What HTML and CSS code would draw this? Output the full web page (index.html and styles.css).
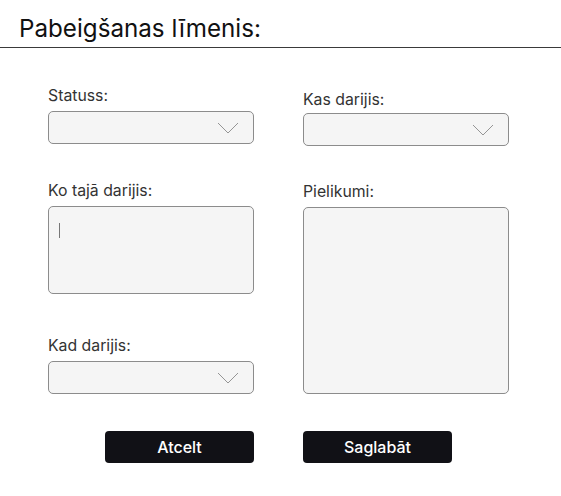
FILE: index.html
```html
<!DOCTYPE html>
<html lang="lv">
<head>
<meta charset="utf-8">
<title>Pabeigšanas līmenis</title>
<link rel="stylesheet" href="styles.css">
</head>
<body>
<header class="header">
  <h1 class="title">Pabeigšanas līmenis:</h1>
</header>
<main class="form">
  <div class="col col-left">
    <div class="field f-status">
      <label class="label">Statuss:</label>
      <div class="select"><svg class="chev" width="22" height="12" viewBox="0 0 22 12"><path d="M1 1 L11 11 L21 1" fill="none" stroke="#8a8a8a" stroke-width="0.9"/></svg></div>
    </div>
    <div class="field f-what">
      <label class="label">Ko tajā darijis:</label>
      <div class="textarea"><span class="caret"></span></div>
    </div>
    <div class="field f-when">
      <label class="label">Kad darijis:</label>
      <div class="select"><svg class="chev" width="22" height="12" viewBox="0 0 22 12"><path d="M1 1 L11 11 L21 1" fill="none" stroke="#8a8a8a" stroke-width="0.9"/></svg></div>
    </div>
  </div>
  <div class="col col-right">
    <div class="field f-who">
      <label class="label">Kas darijis:</label>
      <div class="select"><svg class="chev" width="22" height="12" viewBox="0 0 22 12"><path d="M1 1 L11 11 L21 1" fill="none" stroke="#8a8a8a" stroke-width="0.9"/></svg></div>
    </div>
    <div class="field f-att">
      <label class="label">Pielikumi:</label>
      <div class="attach"></div>
    </div>
  </div>
  <div class="buttons">
    <button class="btn">Atcelt</button>
    <button class="btn">Saglabāt</button>
  </div>
</main>
</body>
</html>
```
FILE: styles.css
```css
html, body {
  margin: 0;
  padding: 0;
  background: #ffffff;
  font-family: Inter, "Noto Sans", sans-serif;
  color: #1a1a1a;
}
.header {
  height: 48px;
  border-bottom: 1px solid #3a3a3a;
  padding-left: 19px;
  box-sizing: border-box;
}
.title {
  margin: 0;
  padding-top: 15px;
  font-size: 24.2px;
  font-weight: 400;
  line-height: 28px;
  color: #111;
}
.form {
  display: grid;
  grid-template-columns: 206px 206px;
  column-gap: 49px;
  padding-left: 48px;
}
.col {
  display: flex;
  flex-direction: column;
}
.label {
  display: block;
  font-size: 15.8px;
  line-height: 18px;
  color: #333;
  margin-bottom: 6px;
}
.select {
  height: 33px;
  box-sizing: border-box;
  border: 1px solid #8c8c8c;
  border-radius: 5px;
  background: #f5f5f5;
  display: flex;
  align-items: center;
  justify-content: flex-end;
  padding-right: 14px;
}
.chev { display: block; }
.textarea {
  height: 88px;
  box-sizing: border-box;
  border: 1px solid #8c8c8c;
  border-radius: 5px;
  background: #f5f5f5;
  padding: 16px 0 0 10px;
}
.caret {
  display: block;
  width: 1px;
  height: 15px;
  background: #777;
}
.attach {
  height: 187px;
  box-sizing: border-box;
  border: 1px solid #8c8c8c;
  border-radius: 5px;
  background: #f5f5f5;
}
.f-status { margin-top: 39px; }
.f-what { margin-top: 38px; }
.f-when { margin-top: 43px; }
.f-who { margin-top: 43px; }
.f-who .label { margin-bottom: 4px; }
.f-att { margin-top: 37px; }
.f-att .label { margin-bottom: 6px; }
.buttons {
  grid-column: 1 / span 2;
  display: grid;
  grid-template-columns: 206px 206px;
  column-gap: 49px;
  margin-top: 37px;
}
.btn {
  width: 149px;
  height: 32px;
  margin-left: 57px;
  border: none;
  border-radius: 4px;
  background: #111116;
  color: #fff;
  font-family: Inter, "Noto Sans", sans-serif;
  font-size: 16px;
  font-weight: 500;
  padding: 0;
}
.buttons .btn:last-child { margin-left: 0; }
```
